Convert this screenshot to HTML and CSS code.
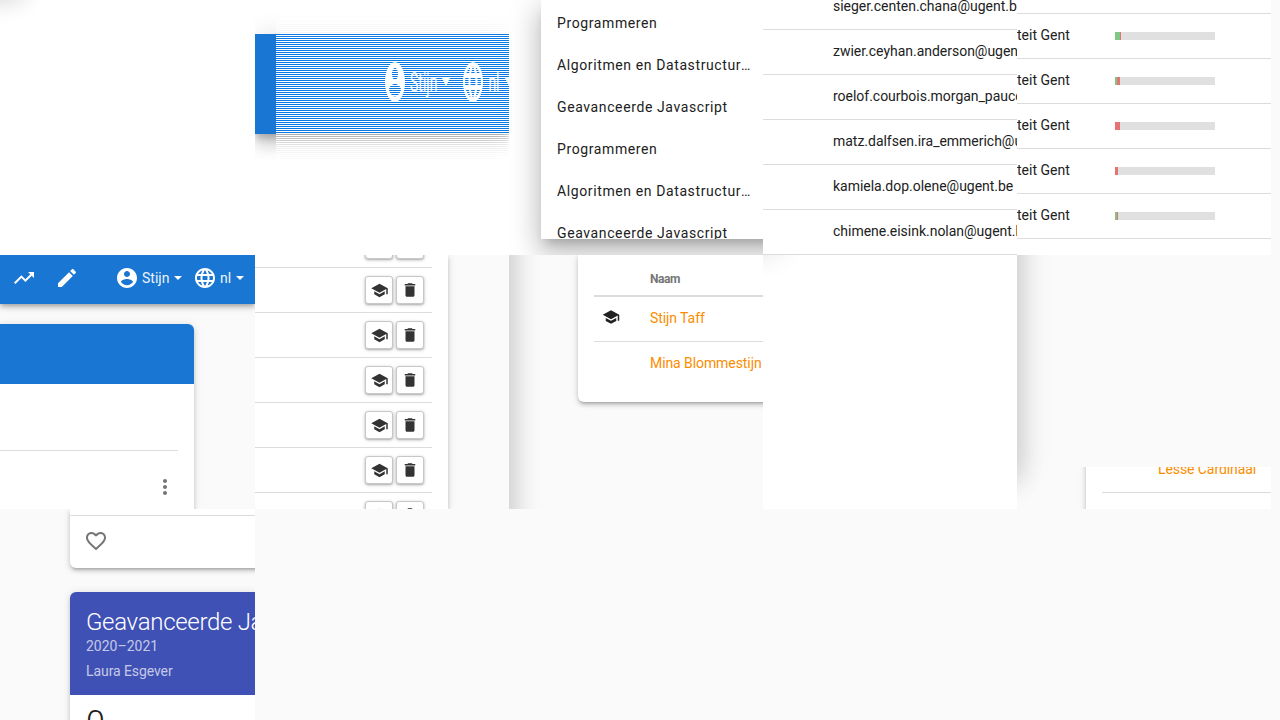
FILE: index.html
```html
<!DOCTYPE html>
<html lang="nl">
<head>
<meta charset="utf-8">
<title>Dodona</title>
<link rel="stylesheet" href="styles.css">
</head>
<body>
<svg width="0" height="0" class="defs">
  <symbol id="account" viewBox="0 0 24 24"><path d="M12 2C6.48 2 2 6.48 2 12s4.48 10 10 10 10-4.480 10-10S17.520 2 12 2zm0 3c1.660 0 3 1.340 3 3s-1.340 3-3 3-3-1.340-3-3 1.340-3 3-3zm0 14.200c-2.500 0-4.710-1.280-6-3.220.03-1.990 4-3.080 6-3.080 1.990 0 5.970 1.090 6 3.080-1.290 1.940-3.500 3.220-6 3.220z"/></symbol>
  <symbol id="globe" viewBox="0 0 24 24"><path d="M11.990 2C6.470 2 2 6.480 2 12s4.470 10 9.990 10C17.520 22 22 17.520 22 12S17.520 2 11.990 2zm6.930 6h-2.950c-.32-1.250-.78-2.450-1.380-3.560 1.840.63 3.370 1.910 4.330 3.560zM12 4.040c.83 1.200 1.480 2.530 1.910 3.960h-3.820c.43-1.430 1.080-2.760 1.910-3.960zM4.260 14C4.100 13.360 4 12.690 4 12s.1-1.360.26-2h3.380c-.08.660-.14 1.320-.14 2 0 .68.06 1.340.14 2H4.260zm.82 2h2.950c.32 1.250.78 2.450 1.380 3.560-1.840-.63-3.370-1.900-4.330-3.560zm2.950-8H5.080c.96-1.660 2.490-2.930 4.330-3.560C8.810 5.550 8.350 6.750 8.030 8zM12 19.960c-.83-1.200-1.480-2.530-1.910-3.960h3.820c-.43 1.430-1.080 2.760-1.910 3.960zM14.340 14H9.660c-.09-.66-.16-1.320-.16-2 0-.68.07-1.350.16-2h4.680c.09.650.16 1.320.16 2 0 .68-.07 1.340-.16 2zm.25 5.560c.6-1.110 1.060-2.310 1.380-3.560h2.950c-.96 1.650-2.490 2.930-4.330 3.560zM16.360 14c.08-.66.14-1.320.14-2 0-.68-.06-1.340-.14-2h3.380c.16.640.26 1.310.26 2s-.1 1.360-.26 2h-3.380z"/></symbol>
  <symbol id="trend" viewBox="0 0 24 24"><path d="M16 6l2.290 2.290-4.880 4.880-4-4L2 16.590 3.410 18l6-6 4 4 6.300-6.290L22 12V6z"/></symbol>
  <symbol id="pencil" viewBox="0 0 24 24"><path d="M3 17.250V21h3.750L17.810 9.940l-3.750-3.750L3 17.250zM20.710 7.040c.39-.39.39-1.020 0-1.410l-2.340-2.340c-.39-.39-1.020-.39-1.410 0l-1.830 1.830 3.750 3.750 1.830-1.830z"/></symbol>
  <symbol id="dots" viewBox="0 0 24 24"><path d="M12 8c1.100 0 2-.9 2-2s-.9-2-2-2-2 .9-2 2 .9 2 2 2zm0 2c-1.100 0-2 .9-2 2s.9 2 2 2 2-.9 2-2-.9-2-2-2zm0 6c-1.100 0-2 .9-2 2s.9 2 2 2 2-.9 2-2-.9-2-2-2z"/></symbol>
  <symbol id="school" viewBox="0 0 24 24"><path d="M5 13.180v4L12 21l7-3.820v-4L12 17l-7-3.820zM12 3L1 9l11 6 9-4.910V17h2V9L12 3z"/></symbol>
  <symbol id="trash" viewBox="0 0 24 24"><path d="M6 19c0 1.100.9 2 2 2h8c1.100 0 2-.9 2-2V7H6v12zM19 4h-3.500l-1-1h-5l-1 1H5v2h14V4z"/></symbol>
  <symbol id="heart" viewBox="0 0 24 24"><path d="M16.500 3c-1.740 0-3.410.81-4.500 2.090C10.910 3.810 9.240 3 7.500 3 4.420 3 2 5.420 2 8.500c0 3.780 3.400 6.860 8.550 11.540L12 21.350l1.450-1.320C18.600 15.360 22 12.280 22 8.500 22 5.420 19.580 3 16.500 3zm-4.400 15.550l-.1.100-.1-.1C7.140 14.240 4 11.390 4 8.500 4 6.500 5.500 5 7.500 5c1.540 0 3.040.99 3.570 2.360h1.870C13.460 5.990 14.960 5 16.500 5c2 0 3.500 1.500 3.500 3.500 0 2.890-3.140 5.740-7.900 10.050z"/></symbol>
</svg>
<main class="mosaic">
  <section class="tile white"><div class="corner-shadow"></div></section>

  <section class="tile white stretched">
    <div class="bar">
      <svg class="icon"><use href="#account"/></svg><span class="user">Stijn</span><i class="caret"></i>
      <svg class="icon globe"><use href="#globe"/></svg><span class="lang">nl</span><i class="caret"></i>
    </div>
    <div class="stripes"></div>
  </section>

  <section class="tile white menu-tile">
    <ul class="menu">
      <li>Programmeren</li><li>Algoritmen en Datastructuren</li><li>Geavanceerde Javascript</li>
      <li>Programmeren</li><li>Algoritmen en Datastructuren</li><li>Geavanceerde Javascript</li>
    </ul>
  </section>

  <section class="tile white emails">
    <div class="row">sieger.centen.chana@ugent.be</div>
    <div class="row">zwier.ceyhan.anderson@ugent.be</div>
    <div class="row">roelof.courbois.morgan_paucek@ugent.be</div>
    <div class="row">matz.dalfsen.ira_emmerich@ugent.be</div>
    <div class="row">kamiela.dop.olene@ugent.be</div>
    <div class="row">chimene.eisink.nolan@ugent.be</div>
  </section>

  <section class="tile white progress">
    <div class="row"></div>
    <div class="row"><span>teit Gent</span><div class="meter"><b style="width:5px"></b><s style="width:1px"></s></div></div>
    <div class="row"><span>teit Gent</span><div class="meter"><b style="width:2px"></b><s style="width:3px"></s></div></div>
    <div class="row"><span>teit Gent</span><div class="meter"><s style="width:5px"></s></div></div>
    <div class="row"><span>teit Gent</span><div class="meter"><s style="width:3px"></s></div></div>
    <div class="row"><span>teit Gent</span><div class="meter"><b style="width:2px"></b><s style="width:1px"></s></div></div>
    <div class="row next"><span>teit Gent</span></div>
  </section>

  <section class="tile app">
    <div class="bar">
      <svg class="icon"><use href="#trend"/></svg><svg class="icon pencil"><use href="#pencil"/></svg>
      <svg class="icon account"><use href="#account"/></svg><span class="user">Stijn</span><i class="caret"></i>
      <svg class="icon globe"><use href="#globe"/></svg><span class="lang">nl</span><i class="caret"></i>
    </div>
    <div class="card panel">
      <div class="panel-head"></div>
      <div class="panel-space"></div>
      <div class="panel-row"><svg class="icon"><use href="#dots"/></svg></div>
    </div>
  </section>

  <section class="tile actions">
    <div class="card">
      <div class="row"><button><svg class="cap"><use href="#school"/></svg></button><button><svg><use href="#trash"/></svg></button></div>
      <div class="row"><button><svg class="cap"><use href="#school"/></svg></button><button><svg><use href="#trash"/></svg></button></div>
      <div class="row"><button><svg class="cap"><use href="#school"/></svg></button><button><svg><use href="#trash"/></svg></button></div>
      <div class="row"><button><svg class="cap"><use href="#school"/></svg></button><button><svg><use href="#trash"/></svg></button></div>
      <div class="row"><button><svg class="cap"><use href="#school"/></svg></button><button><svg><use href="#trash"/></svg></button></div>
      <div class="row"><button><svg class="cap"><use href="#school"/></svg></button><button><svg><use href="#trash"/></svg></button></div>
      <div class="row"><button><svg class="cap"><use href="#school"/></svg></button><button><svg><use href="#trash"/></svg></button></div>
    </div>
  </section>

  <section class="tile names">
    <div class="edge"></div>
    <div class="card">
      <div class="head">Naam</div>
      <div class="row first"><svg><use href="#school"/></svg><a>Stijn Taff</a></div>
      <div class="row last"><a>Mina Blommestijn</a></div>
    </div>
  </section>

  <section class="tile white under-menu"><div class="top-shadow"></div></section>

  <section class="tile side">
    <div class="edge"></div>
    <div class="clip"><div class="card">
      <div class="row"><a>Lesse Cardinaal</a></div>
      <div class="row next"><a>Fien</a></div>
    </div></div>
  </section>

  <section class="tile courses">
    <div class="card top"><div class="foot"><svg class="icon"><use href="#heart"/></svg></div></div>
    <div class="card course">
      <div class="course-head"><h2>Geavanceerde Javascript</h2><p>2020–2021</p><p class="teacher">Laura Esgever</p></div>
      <div class="count">0</div>
    </div>
  </section>
</main>
</body>
</html>
```

FILE: styles.css
```css
* { box-sizing: border-box; }
body { margin: 0; width: 1280px; height: 720px; overflow: hidden; background: #fafafa; color: #212121; font: 14px/20px Roboto, sans-serif; }
.defs { position: absolute; }
.mosaic { display: grid; grid-template-columns: 255px repeat(4, 254px); grid-template-rows: 255px 254px 211px; }
.tile { position: relative; overflow: hidden; white-space: nowrap; min-width: 0; }
.white { background: #fff; }
.icon { width: 24px; height: 24px; fill: currentColor; flex: none; display: block; }
a { color: #fb8c00; letter-spacing: -.08px; }
.row { height: 45px; border-bottom: 1px solid #dcdcdc; }
.card { background: #fff; border-radius: 6px; box-shadow: 0 3px 3px -2px rgba(0,0,0,.2), 0 3px 4px rgba(0,0,0,.14), 0 1px 8px rgba(0,0,0,.12); }

.corner-shadow { position: absolute; left: -60px; top: -118px; width: 80px; height: 100px; box-shadow: 0 16px 24px 2px rgba(0,0,0,.14), 0 6px 30px 5px rgba(0,0,0,.08); }

.bar { display: flex; align-items: center; height: 50px; background: #1976d2; color: #fff; box-shadow: 0 2px 4px -1px rgba(0,0,0,.2), 0 4px 5px rgba(0,0,0,.14), 0 1px 10px rgba(0,0,0,.12); }
.user { width: 28px; margin-left: 3px; opacity: .92; }
.lang { width: 12px; margin-left: 3px; opacity: .92; }
.caret { border: 4px solid transparent; border-top-color: #fff; border-bottom: 0; margin-left: 4px; flex: none; }
.globe { margin-left: 11px; }
.stretched { padding-top: 34px; }
.stretched .bar { transform: scaleY(2); transform-origin: top; padding: 0 0 2px 128px; background: linear-gradient(90deg, #1976d2 21px, #0b79e3 21px); box-shadow: 0 3px 5px -1px rgba(0,0,0,.2), 0 6px 10px rgba(0,0,0,.14), 0 1px 18px rgba(0,0,0,.12); }
.stretched .caret { margin-left: 5px; }
.stripes { position: absolute; top: 0; bottom: 0; left: 21px; right: 0; background: repeating-linear-gradient(transparent 0 1px, #fff 1px 2px); }

.menu-tile { padding-left: 32px; }
.menu { margin: 0; padding: 2px 12px 0 16px; list-style: none; height: 239px; background: #fff; width: 270px; box-shadow: 0 8px 10px -5px rgba(0,0,0,.2), 0 16px 24px 2px rgba(0,0,0,.14), 0 6px 30px 5px rgba(0,0,0,.12); overflow: hidden; }
.menu li { height: 42px; line-height: 42px; width: 196px; overflow: hidden; text-overflow: ellipsis; letter-spacing: .61px; }

.emails .row { padding: 11px 0 0 70px; letter-spacing: -.02px; }
.emails .row:first-child { margin-top: -15px; }
.progress .row { display: flex; align-items: center; }
.progress .row:first-child { height: 14px; }
.progress span { width: 98px; padding-bottom: 2px; }
.progress .next span { padding: 1px 0 0; }
.meter { display: flex; width: 100px; height: 8px; background: #e0e0e0; }
.meter b { background: #81c784; }
.meter s { background: #e57373; }

.app .bar { height: 49px; padding: 0 0 3px 12px; }
.pencil { margin-left: 19px; }
.account { margin-left: 36px; }
.panel { margin-top: 20px; width: 194px; height: 200px; border-top-left-radius: 0; overflow: hidden; }
.panel-head { height: 60px; background: #1976d2; }
.panel-space { height: 67px; margin-right: 16px; border-bottom: 1px solid #dcdcdc; }
.panel-row { padding: 24px 17px 0; display: flex; justify-content: flex-end; color: #757575; }

.actions .card { width: 193px; height: 254px; border-radius: 0; padding-right: 16px; }
.actions .row { display: flex; justify-content: flex-end; align-items: flex-start; gap: 3px; padding: 8px 8px 0 0; }
.actions .row:first-child { height: 13px; padding: 0 8px 0 0; align-items: flex-end; }
.actions .row:first-child button { margin-bottom: 8px; }
.actions button { width: 28px; height: 28px; padding: 0; display: grid; place-items: center; background: #fff; border: 1px solid #c8c8c8; border-radius: 3px; box-shadow: 0 1px 2px rgba(0,0,0,.24), 0 1px 4px rgba(0,0,0,.14); }
.actions svg { width: 18px; height: 18px; fill: #333; }
.actions .cap { transform: translate(.5px, .4px); }

.names { padding-left: 69px; }
.edge { position: absolute; right: 100%; top: -60px; width: 100px; height: 400px; box-shadow: 0 16px 24px 2px rgba(0,0,0,.14), 0 6px 30px 5px rgba(0,0,0,.1); }
.names .card { width: 260px; height: 147px; padding-left: 16px; border-radius: 0 0 6px 6px; }
.head { height: 42px; padding: 14px 0 0 56px; border-bottom: 2px solid #dcdcdc; font-size: 12px; font-weight: 700; color: #757575; letter-spacing: -.4px; }
.names .row { padding: 11px 0 0 56px; }
.names .first { display: flex; padding-left: 8px; }
.names .first svg { width: 18px; height: 18px; fill: #212121; margin-right: 30px; }
.names .last { border: 0; }
.top-shadow { position: absolute; left: -100px; top: -65px; width: 110px; height: 50px; box-shadow: 0 6px 30px 5px rgba(0,0,0,.16); }

.side { padding-top: 212px; }
.side .edge { height: 270px; }
.clip { height: 42px; overflow: hidden; padding-left: 69px; }
.side .card { margin-top: -19px; height: 90px; border-radius: 0; padding-left: 16px; }
.side .row { padding: 11px 0 0 56px; }
.side .next { padding-top: 12px; }

.courses { padding-left: 70px; }
.courses .card { width: 240px; }
.top { height: 59px; border-radius: 0 0 6px 6px; padding-top: 6px; }
.foot { height: 53px; border-top: 1px solid #dcdcdc; padding: 13px 14px; color: #757575; }
.course { margin-top: 24px; height: 180px; overflow: hidden; }
.course-head { height: 103px; padding: 16px 16px 0; background: #3f51b5; color: rgba(255,255,255,.7); }
h2 { margin: 0; font-size: 24px; line-height: 28px; font-weight: 300; color: #fff; letter-spacing: -.3px; }
p { margin: 0; }
.teacher { margin-top: 5px; letter-spacing: -.08px; }
.count { padding: 7px 16px; font-size: 34px; line-height: 40px; font-weight: 300; }
```
